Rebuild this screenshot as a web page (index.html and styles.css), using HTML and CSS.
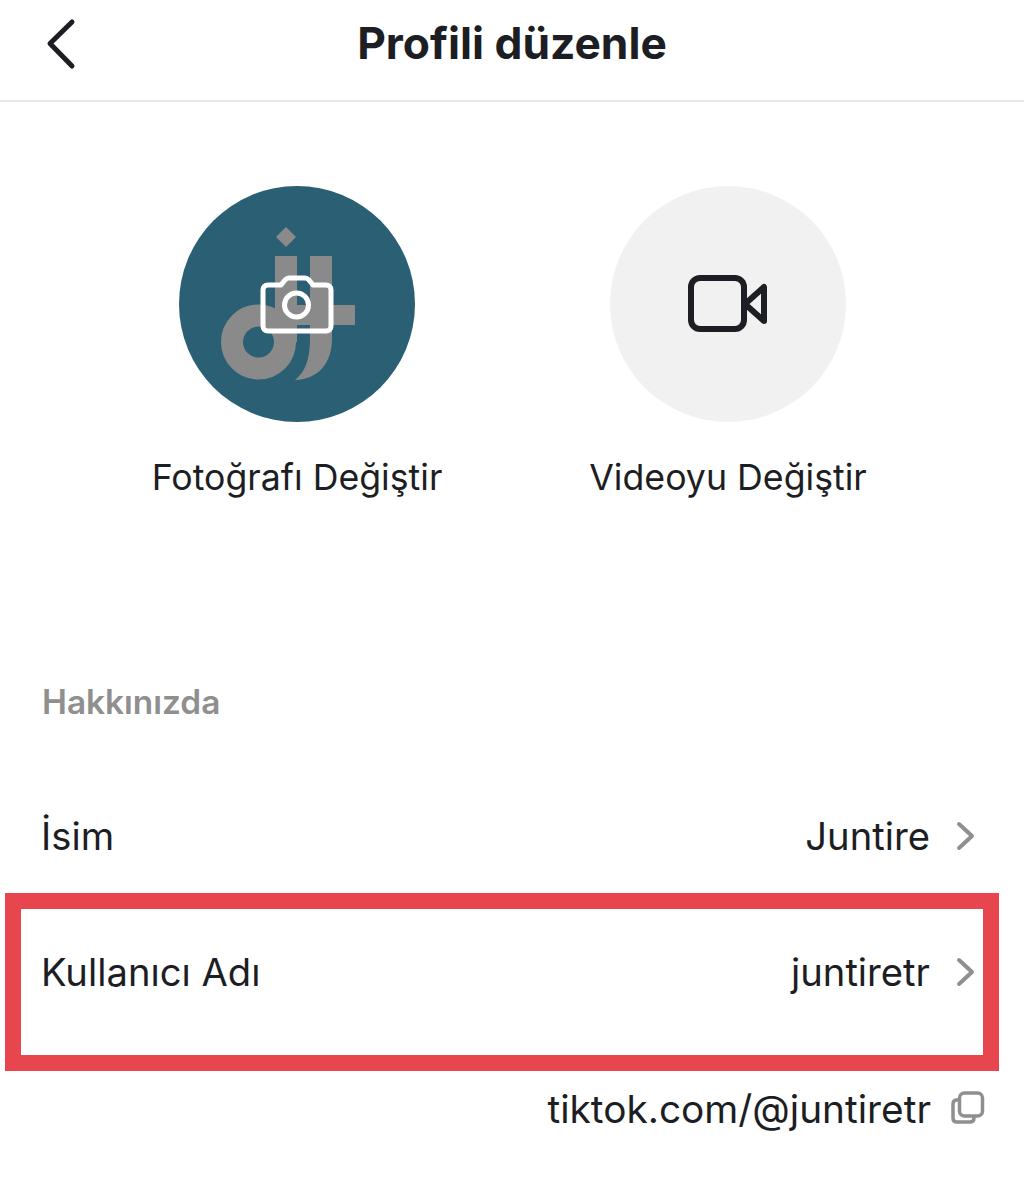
FILE: index.html
```html
<!DOCTYPE html>
<html lang="tr">

<head>
    <meta charset="utf-8">
    <link rel="stylesheet" href="styles.css">
    <title>Profili düzenle</title>
</head>

<body>
    <header class="topbar">
        <svg class="back-icon" width="40" height="60" viewBox="0 0 40 60">
            <polyline points="29,8 7,29.5 29,52" />
        </svg>
        <h1 class="title">Profili düzenle</h1>
    </header>

    <section class="media">
        <div class="media-item">
            <svg class="media-circle" width="236" height="236" viewBox="0 0 236 236">
                <circle class="avatar-bg" cx="118" cy="118" r="118" />
                <g class="logo">
                    <polygon class="logo-fill" points="107,41 117,51 107,61 97,51" />
                    <circle class="logo-ring" cx="79.5" cy="156" r="26.5" />
                    <rect class="logo-fill" x="96" y="70" width="22" height="86" />
                    <rect class="logo-fill" x="96" y="119" width="80" height="20" />
                    <path class="logo-fill" d="M131 70h22v82c0 26-14 41-37 42 10-8 15-20 15-42z" />
                </g>
                <g class="camera-icon">
                    <path d="M89 99h13l4-5c1-1 2-2 4-2h16c2 0 3 1 4 2l4 5h13c3 0 5 2 5 5v36c0 3-2 5-5 5H89c-3 0-5-2-5-5v-36c0-3 2-5 5-5z" />
                    <circle cx="117.500" cy="119" r="12" />
                </g>
            </svg>
            <span class="media-label">Fotoğrafı Değiştir</span>
        </div>
        <div class="media-item">
            <svg class="media-circle" width="236" height="236" viewBox="0 0 236 236">
                <circle class="video-bg" cx="118" cy="118" r="118" />
                <g class="video-icon">
                    <rect x="81" y="92" width="53" height="51" rx="9" />
                    <polygon points="135,118 154,101 154,135" />
                </g>
            </svg>
            <span class="media-label">Videoyu Değiştir</span>
        </div>
    </section>

    <h2 class="section-title">Hakkınızda</h2>

    <div class="row">
        <span>İsim</span>
        <span class="row-value">Juntire
            <svg class="chevron" width="20" height="30" viewBox="0 0 20 30">
                <polyline points="4,3 17,15 4,27" />
            </svg>
        </span>
    </div>

    <div class="row row-marked">
        <span>Kullanıcı Adı</span>
        <span class="row-value">juntiretr
            <svg class="chevron" width="20" height="30" viewBox="0 0 20 30">
                <polyline points="4,3 17,15 4,27" />
            </svg>
        </span>
    </div>

    <div class="link-row">
        <span>tiktok.com/@juntiretr</span>
        <svg class="copy-icon" width="34" height="34" viewBox="0 0 34 34">
            <path d="M7 9H6c-2.500 0-4 1.500-4 4v14c0 2.500 1.500 4 4 4h13c2.500 0 4-1.500 4-4v-1" />
            <rect x="8.500" y="2" width="23" height="23" rx="5" />
        </svg>
    </div>
</body>

</html>
```

FILE: styles.css
```css
body {
    margin: 0;
    background: #ffffff;
    color: #1c1e23;
    font-family: "Inter", "Liberation Sans", sans-serif;
    font-size: 38.200px;
}

.topbar {
    height: 100px;
    border-bottom: 2px solid #e8e8e8;
    display: flex;
    align-items: center;
    justify-content: center;
    position: relative;
}

.title {
    margin: 0 0 15px 0;
    font-size: 44.300px;
    font-weight: 700;
}

.back-icon {
    position: absolute;
    left: 43px;
    top: 14px;
    fill: none;
    stroke: #1c1e23;
    stroke-width: 5;
    stroke-linecap: round;
    stroke-linejoin: round;
}

.media {
    display: flex;
    justify-content: center;
    gap: 195px;
    padding-top: 84px;
    padding-left: 1px;
}

.media-item {
    width: 236px;
    display: flex;
    flex-direction: column;
    align-items: center;
    white-space: nowrap;
}

.media-circle {
    display: block;
    margin-bottom: 32px;
}

.media-label {
    font-size: 35.700px;
    line-height: 46px;
}

.avatar-bg {
    fill: #2b6074;
}

.video-bg {
    fill: #f1f1f2;
}

.logo-fill {
    fill: #8a8a8a;
}

.logo-ring {
    fill: none;
    stroke: #8a8a8a;
    stroke-width: 22;
}

.camera-icon {
    fill: none;
    stroke: #ffffff;
    stroke-width: 5;
    stroke-linejoin: round;
}

.video-icon {
    fill: none;
    stroke: #1c1e23;
    stroke-width: 6;
    stroke-linejoin: round;
}

.section-title {
    margin: 179px 0 0 42px;
    font-size: 33.400px;
    font-weight: 600;
    line-height: 46px;
    color: #8f8f8f;
}

.row {
    display: flex;
    justify-content: space-between;
    align-items: center;
    height: 46px;
    margin-top: 88px;
    padding: 0 49px 0 41px;
}

.row-value {
    display: flex;
    align-items: center;
    gap: 25px;
}

.chevron {
    fill: none;
    stroke: #8f8f8f;
    stroke-width: 4;
    stroke-linecap: round;
    stroke-linejoin: round;
}

.row-marked {
    box-sizing: border-box;
    width: 994px;
    height: 178px;
    margin: 34px 0 0 5px;
    border: 16px solid #e8464f;
    padding: 0 8px 20px 20px;
}

.link-row {
    display: flex;
    justify-content: flex-end;
    align-items: center;
    gap: 20px;
    height: 46px;
    margin-top: 14px;
    padding-right: 39px;
    font-size: 38.800px;
}

.copy-icon {
    fill: none;
    stroke: #8f8f8f;
    stroke-width: 3.500;
    stroke-linecap: round;
    stroke-linejoin: round;
}
```
